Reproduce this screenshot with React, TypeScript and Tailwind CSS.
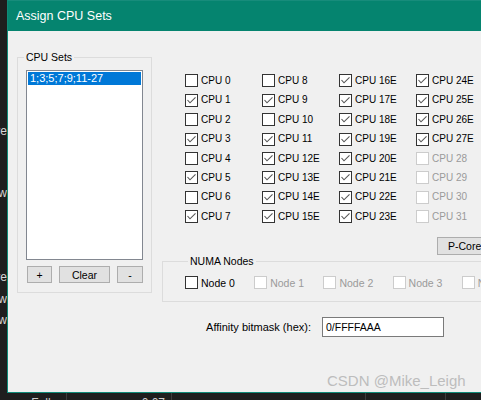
import clsx from 'clsx';

const font = "font-['Liberation_Sans',Arial,sans-serif]";

const checkedSet = new Set([1, 3, 5, 7, 9, ...Array.from({ length: 17 }, (_, i) => 11 + i)]);

function Box({ checked, disabled }: { checked?: boolean; disabled?: boolean }) {
  return (
    <span
      className={clsx(
        'w-[13px] h-[13px] border bg-white shrink-0 flex items-center justify-center',
        disabled ? 'border-[#cccccc]' : 'border-[#333333]'
      )}
    >
      {checked && (
        <svg width="11" height="11" viewBox="0 0 11 11">
          <path d="M1.5 5 L4 7.8 L9.5 2.3" fill="none" stroke="#555555" strokeWidth="1.1" />
        </svg>
      )}
    </span>
  );
}

function Cpu({ n }: { n: number }) {
  const disabled = n >= 28;
  const label = `CPU ${n}${n >= 12 && n <= 27 ? 'E' : ''}`;
  return (
    <div className="flex items-center gap-[3px] h-[19.4px]">
      <Box checked={checkedSet.has(n)} disabled={disabled} />
      <span className={clsx('text-[10px] leading-[12px]', disabled ? 'text-[#9a9a9a]' : 'text-black')}>
        {label}
      </span>
    </div>
  );
}

function Btn({ label, w }: { label: string; w: string }) {
  return (
    <div
      className={clsx(
        'h-[17px] border border-[#adadad] bg-[#e1e1e1] flex items-center justify-center text-[10.5px] leading-[12px] text-black',
        w
      )}
    >
      {label}
    </div>
  );
}

export default function App() {
  const cpus = Array.from({ length: 32 }, (_, i) => i);
  const nodes = [0, 1, 2, 3, 4];

  return (
    <div className={clsx('w-[481px] h-[400px] bg-[#1e1e1e] overflow-hidden relative flex flex-col', font)}>
      <div className="flex h-[393px] shrink-0">
        {/* strip of the window behind */}
        <div className="w-[7px] shrink-0 flex flex-col text-[12px] leading-[14px] text-[#d6d6d6] overflow-hidden">
          <div className="mt-[124px] flex justify-end"><span className="shrink-0 whitespace-nowrap">Active</span></div>
          <div className="mt-[48px] flex justify-end"><span className="shrink-0 whitespace-nowrap">Show</span></div>
          <div className="mt-[70px] flex justify-end"><span className="shrink-0 whitespace-nowrap">Active</span></div>
          <div className="mt-[8px] flex justify-end"><span className="shrink-0 whitespace-nowrap">Show</span></div>
          <div className="mt-[7px] flex justify-end"><span className="shrink-0 whitespace-nowrap">Show</span></div>
        </div>

        {/* dialog */}
        <div className="flex-1 min-w-0 flex flex-col border-l border-b border-[#0f8a78] overflow-hidden">
          <div className="h-[31px] shrink-0 bg-[#05846f] border-t border-[#178c7b] flex items-center pl-[8px] text-white text-[12.5px]">
            Assign CPU Sets
          </div>

          <div className="flex-1 bg-[#f0f0f0] flex items-start pl-[9px] pt-[20px]">
            {/* CPU Sets group */}
            <fieldset className="w-[135px] h-[242px] shrink-0 border border-[#dcdcdc] px-[8px] pb-[9px] flex flex-col">
              <legend className="ml-[-2px] px-[2px] text-[10.5px] leading-[12px] text-black">CPU Sets</legend>
              <div className="mt-[7px] h-[191px] border border-[#828790] bg-white p-[1px]">
                <div className="h-[13px] bg-[#0078d7] text-white text-[11px] leading-[13px] pl-[2px]">
                  1;3;5;7;9;11-27
                </div>
              </div>
              <div className="mt-[6px] flex gap-[7px] pl-[1px]">
                <Btn label="+" w="w-[25px]" />
                <Btn label="Clear" w="w-[51px]" />
                <Btn label="-" w="w-[26px]" />
              </div>
            </fieldset>

            {/* right side */}
            <div className="ml-[10px] w-[340px] shrink-0 flex flex-col pt-[20.3px]">
              <div className="ml-[23px] grid grid-flow-col grid-rows-[repeat(8,19.4px)] grid-cols-[77px_77px_77px_77px]">
                {cpus.map((n) => (
                  <Cpu key={n} n={n} />
                ))}
              </div>

              <div className="mt-[10.5px] ml-[275px] w-[60px] h-[18px] border border-[#adadad] bg-[#e1e1e1] text-[10.5px] leading-[16px] pl-[10px] text-black">
                P-Core
              </div>

              <fieldset className="mt-[0.5px] w-[340px] border border-[#dcdcdc] pl-[22px] pb-[12px]">
                <legend className="ml-[3px] px-[2px] text-[10.5px] leading-[12px] text-black">NUMA Nodes</legend>
                <div className="mt-[9px] flex h-[13px]">
                  {nodes.map((n) => (
                    <div key={n} className="w-[69.2px] shrink-0 flex items-center gap-[3px]">
                      <Box disabled={n > 0} />
                      <span className={clsx('text-[10.5px] leading-[12px]', n > 0 ? 'text-[#9a9a9a]' : 'text-black')}>
                        Node {n}
                      </span>
                    </div>
                  ))}
                </div>
              </fieldset>

              <div className="mt-[15px] flex items-center">
                <div className="w-[149px] text-right text-[11px] leading-[13px] text-black">Affinity bitmask (hex):</div>
                <div className="ml-[11px] w-[122px] h-[20px] border border-[#7a7a7a] bg-white flex items-center pl-[3px] text-[10.5px] text-black">
                  0/FFFFAAA
                </div>
              </div>
            </div>
          </div>
        </div>
      </div>

      {/* status bar of the window behind */}
      <div className="h-[7px] shrink-0 flex text-[12px] leading-[14px] text-[#cccccc] overflow-hidden">
        <div className="w-[66px] shrink-0 text-right pr-[6px] pt-[3px] whitespace-nowrap">Full ↕</div>
        <div className="w-px shrink-0 bg-[#3c3c3c]" />
        <div className="w-[104px] shrink-0 text-right pr-[6px] pt-[3px]">0.07</div>
        <div className="w-px shrink-0 bg-[#3c3c3c]" />
        <div className="w-[193px] shrink-0" />
        <div className="w-px shrink-0 bg-[#3c3c3c]" />
        <div className="w-[79px] shrink-0" />
        <div className="w-px shrink-0 bg-[#3c3c3c]" />
      </div>

      <div className="absolute left-[327px] top-[372px] text-[15px] leading-[18px] text-[#bdbdbd] whitespace-nowrap">
        CSDN @Mike_Leigh
      </div>
    </div>
  );
}
